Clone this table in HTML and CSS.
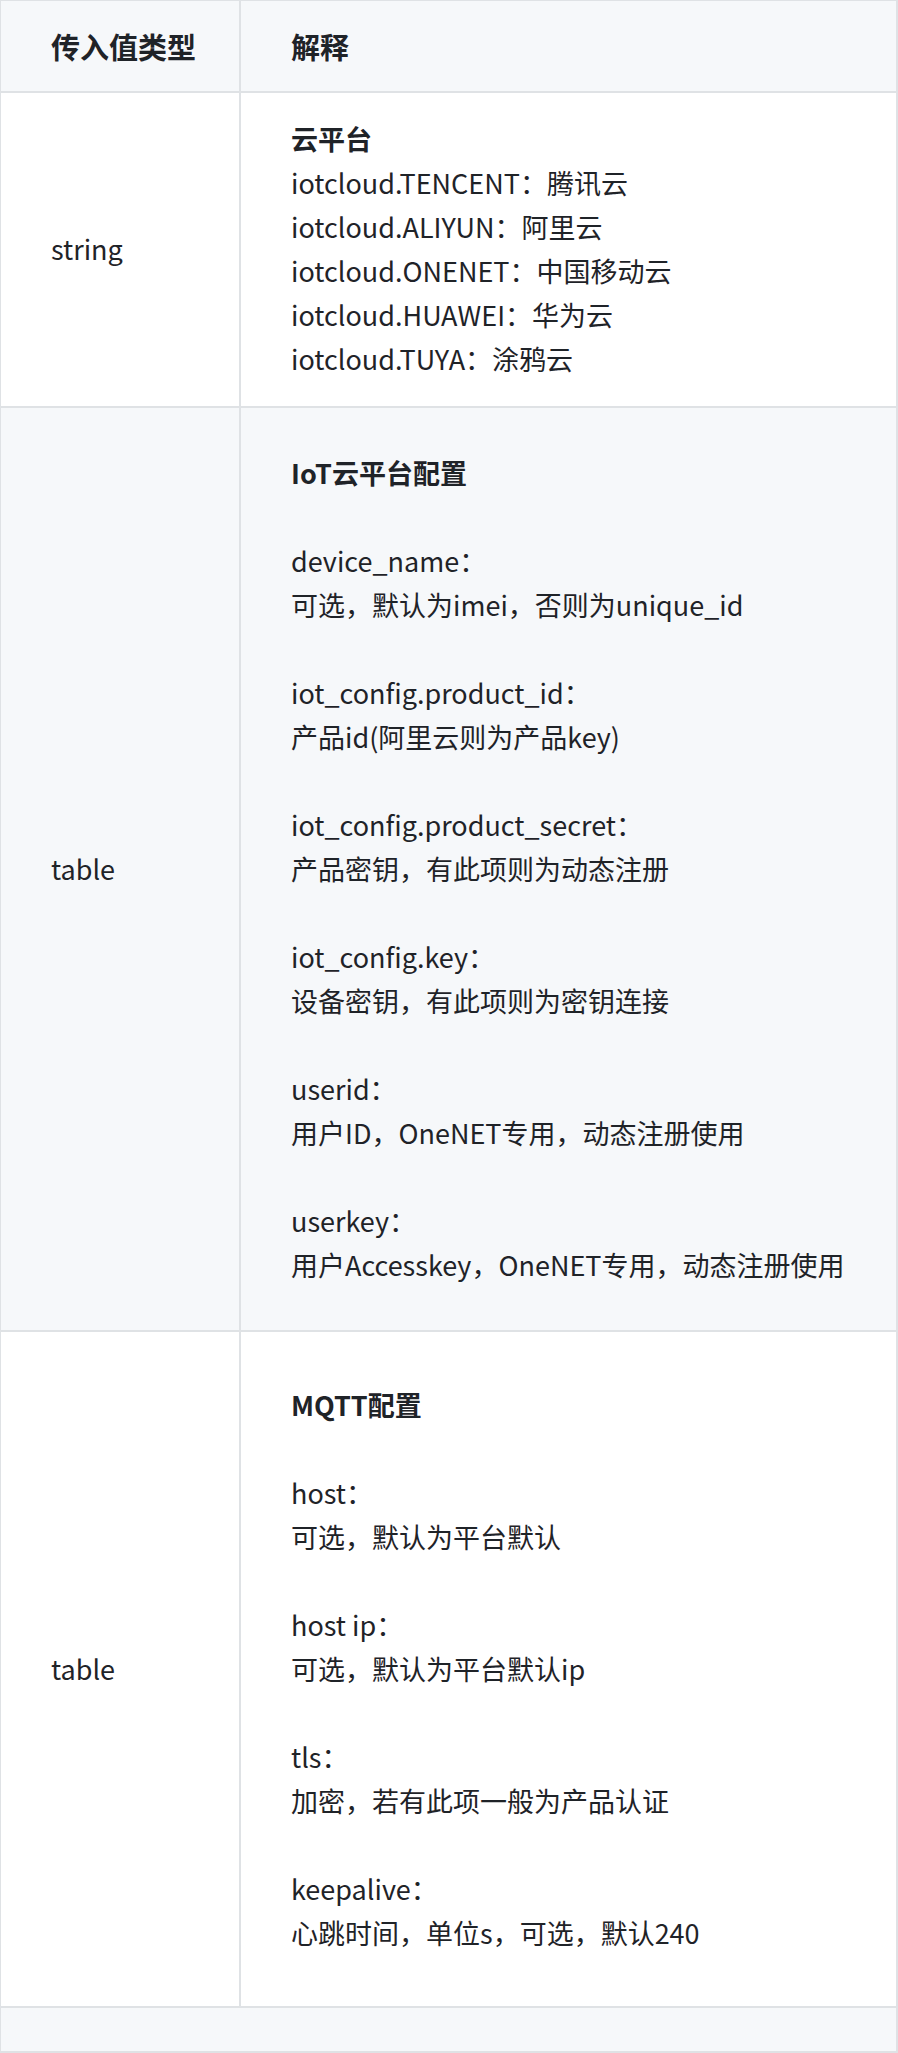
FILE: index.html
```html
<!DOCTYPE html>
<html lang="zh-CN">
<head>
<meta charset="utf-8">
<title>参数说明</title>
<link rel="stylesheet" href="styles.css">
</head>
<body>
<table class="params">
  <colgroup>
    <col class="col-type">
    <col class="col-desc">
  </colgroup>
  <thead>
    <tr class="head-row">
      <th>传入值类型</th>
      <th>解释</th>
    </tr>
  </thead>
  <tbody>
    <tr class="row row-cloud">
      <td class="type">string</td>
      <td class="desc"><strong>云平台</strong><br>iotcloud.TENCENT：腾讯云<br>iotcloud.ALIYUN：阿里云<br>iotcloud.ONENET：中国移动云<br>iotcloud.HUAWEI：华为云<br>iotcloud.TUYA：涂鸦云</td>
    </tr>
    <tr class="row row-iot alt">
      <td class="type">table</td>
      <td class="desc"><strong>IoT云平台配置</strong><br><br>device_name：<br>可选，默认为imei，否则为unique_id<br><br>iot_config.product_id：<br>产品id(阿里云则为产品key)<br><br>iot_config.product_secret：<br>产品密钥，有此项则为动态注册<br><br>iot_config.key：<br>设备密钥，有此项则为密钥连接<br><br>userid：<br>用户ID，OneNET专用，动态注册使用<br><br>userkey：<br>用户Accesskey，OneNET专用，动态注册使用</td>
    </tr>
    <tr class="row row-mqtt">
      <td class="type">table</td>
      <td class="desc"><strong>MQTT配置</strong><br><br>host：<br>可选，默认为平台默认<br><br>host ip：<br>可选，默认为平台默认ip<br><br>tls：<br>加密，若有此项一般为产品认证<br><br>keepalive：<br>心跳时间，单位s，可选，默认240</td>
    </tr>
    <tr class="row row-empty alt">
      <td class="empty" colspan="2"></td>
    </tr>
  </tbody>
</table>
</body>
</html>
```

FILE: styles.css
```css
html, body {
  margin: 0;
  padding: 0;
  background: #ffffff;
}

body {
  font-family: "Noto Sans CJK SC", "Noto Sans", sans-serif;
  font-size: 27px;
  line-height: 44px;
  color: #1f2328;
}

.params {
  border-collapse: collapse;
  table-layout: fixed;
  width: 899px;
  margin: -1px 0 0 -1px;
  border: 2px solid #dfe2e5;
}

.col-type {
  width: 240px;
}

.params th,
.params td {
  border: 2px solid #dfe2e5;
  padding: 0 20px 0 50px;
  text-align: left;
  vertical-align: middle;
}

.params th {
  font-size: 29px;
  font-weight: 700;
  padding-top: 23px;
  padding-bottom: 23px;
}

.head-row {
  background: #f6f8fa;
}

.alt {
  background: #f6f8fa;
}

.desc strong {
  font-weight: 700;
}

.row-cloud td {
  padding-top: 24px;
  padding-bottom: 25px;
}

.row-iot td {
  padding-top: 43px;
  padding-bottom: 43px;
}

.row-mqtt td {
  padding-top: 51px;
  padding-bottom: 51px;
}

.params td.empty {
  padding: 0;
  height: 43px;
}
```
